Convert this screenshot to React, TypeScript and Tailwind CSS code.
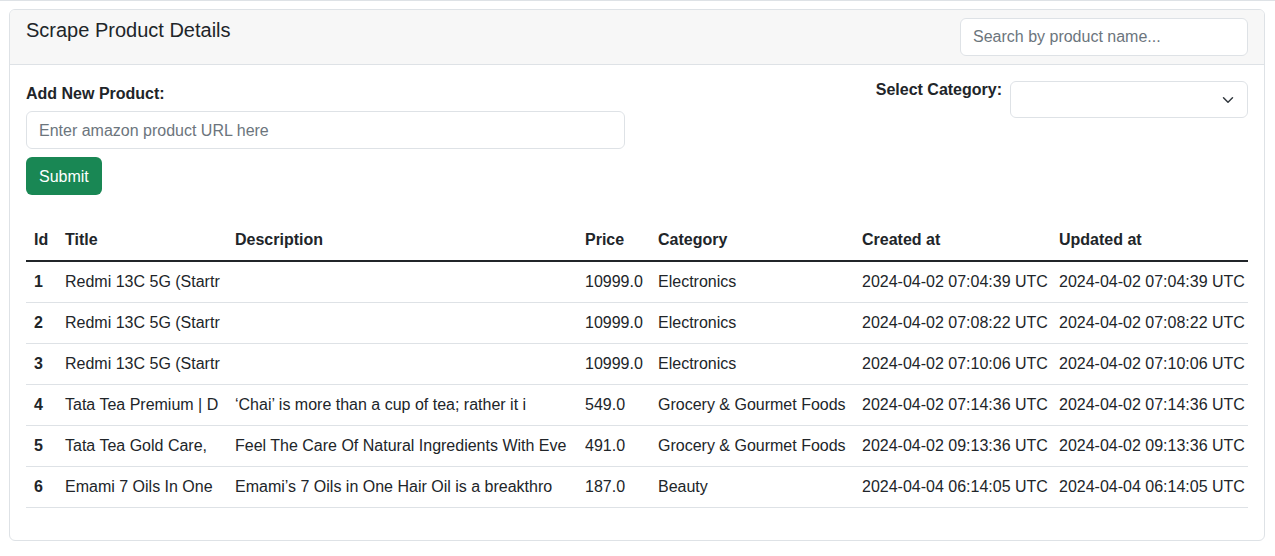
import React from "react";

const products = [
    {
        id: 1,
        title: "Redmi 13C 5G (Startr",
        description: "",
        price: "10999.0",
        category: "Electronics",
        created: "2024-04-02 07:04:39 UTC",
        updated: "2024-04-02 07:04:39 UTC",
    },
    {
        id: 2,
        title: "Redmi 13C 5G (Startr",
        description: "",
        price: "10999.0",
        category: "Electronics",
        created: "2024-04-02 07:08:22 UTC",
        updated: "2024-04-02 07:08:22 UTC",
    },
    {
        id: 3,
        title: "Redmi 13C 5G (Startr",
        description: "",
        price: "10999.0",
        category: "Electronics",
        created: "2024-04-02 07:10:06 UTC",
        updated: "2024-04-02 07:10:06 UTC",
    },
    {
        id: 4,
        title: "Tata Tea Premium | D",
        description: "\u2018Chai\u2019 is more than a cup of tea; rather it i",
        price: "549.0",
        category: "Grocery & Gourmet Foods",
        created: "2024-04-02 07:14:36 UTC",
        updated: "2024-04-02 07:14:36 UTC",
    },
    {
        id: 5,
        title: "Tata Tea Gold Care,",
        description: "Feel The Care Of Natural Ingredients With Eve",
        price: "491.0",
        category: "Grocery & Gourmet Foods",
        created: "2024-04-02 09:13:36 UTC",
        updated: "2024-04-02 09:13:36 UTC",
    },
    {
        id: 6,
        title: "Emami 7 Oils In One",
        description: "Emami\u2019s 7 Oils in One Hair Oil is a breakthro",
        price: "187.0",
        category: "Beauty",
        created: "2024-04-04 06:14:05 UTC",
        updated: "2024-04-04 06:14:05 UTC",
    },
];

export default function App() {
    return (
        <div className="min-h-[556px] bg-white border-t border-[#dee2e6] pl-[9px] pr-[10px] pt-[8px] text-[16px] leading-6 text-[#212529] font-['Liberation_Sans',Arial,sans-serif]">
            <div className="border border-[#dee2e6] rounded-[6px] overflow-hidden">
                {/* Card header */}
                <div className="flex items-start justify-between bg-[#f7f7f7] border-b border-[#dee2e6] px-4 py-2">
                    <h5 className="text-[20px] leading-6 font-medium">Scrape Product Details</h5>
                    <input
                        type="text"
                        placeholder="Search by product name..."
                        className="w-[288px] h-[38px] bg-white border border-[#dee2e6] rounded-[6px] px-3 text-[16px] placeholder:text-[#6c757d] outline-none"
                    />
                </div>

                {/* Card body */}
                <div className="p-4">
                    <div className="flex items-start justify-between">
                        <div className="w-[599px] flex flex-col items-start">
                            <label className="font-bold text-[16px] leading-6 mt-[1px] mb-[5px]">Add New Product:</label>
                            <input
                                type="text"
                                placeholder="Enter amazon product URL here"
                                className="w-full h-[38px] bg-white border border-[#dee2e6] rounded-[6px] px-3 pt-[1px] text-[16px] placeholder:text-[#6c757d] outline-none"
                            />
                            <button className="mt-2 h-[38px] px-[13px] bg-[#198754] text-white rounded-[6px] text-[16px] pt-[1px]">
                                Submit
                            </button>
                        </div>
                        <div className="flex items-start gap-2">
                            <label className="font-bold text-[16px] leading-6 -mt-[3px]">Select Category:</label>
                            <div className="relative w-[238px] h-[37px] border border-[#dee2e6] rounded-[6px] bg-white">
                                <svg
                                    className="absolute right-[11px] top-1/2 -translate-y-1/2"
                                    width="16"
                                    height="12"
                                    viewBox="0 0 16 16"
                                    fill="none"
                                >
                                    <path d="m2 5 6 6 6-6" stroke="#343a40" strokeWidth="2" strokeLinecap="round" strokeLinejoin="round" />
                                </svg>
                            </div>
                        </div>
                    </div>

                    {/* Products table */}
                    <table className="w-full table-fixed mt-[25px] mb-4 border-collapse">
                        <colgroup>
                            <col className="w-[31px]" />
                            <col className="w-[170px]" />
                            <col className="w-[350px]" />
                            <col className="w-[73px]" />
                            <col className="w-[204px]" />
                            <col className="w-[197px]" />
                            <col />
                        </colgroup>
                        <thead>
                            <tr className="border-b-2 border-[#212529]">
                                {["Id", "Title", "Description", "Price", "Category", "Created at", "Updated at"].map((h) => (
                                    <th key={h} className="text-left font-bold px-2 py-2 whitespace-nowrap">
                                        {h}
                                    </th>
                                ))}
                            </tr>
                        </thead>
                        <tbody>
                            {products.map((p) => (
                                <tr key={p.id} className="border-b border-[#dee2e6]">
                                    <td className="px-2 py-2 font-bold">{p.id}</td>
                                    <td className="px-2 py-2 whitespace-nowrap overflow-hidden">{p.title}</td>
                                    <td className="px-2 py-2 whitespace-nowrap overflow-hidden">{p.description}</td>
                                    <td className="px-2 py-2 whitespace-nowrap">{p.price}</td>
                                    <td className="px-2 py-2 whitespace-nowrap">{p.category}</td>
                                    <td className="px-2 py-2 whitespace-nowrap">{p.created}</td>
                                    <td className="px-2 py-2 whitespace-nowrap">{p.updated}</td>
                                </tr>
                            ))}
                        </tbody>
                    </table>
                </div>
            </div>
        </div>
    );
}
